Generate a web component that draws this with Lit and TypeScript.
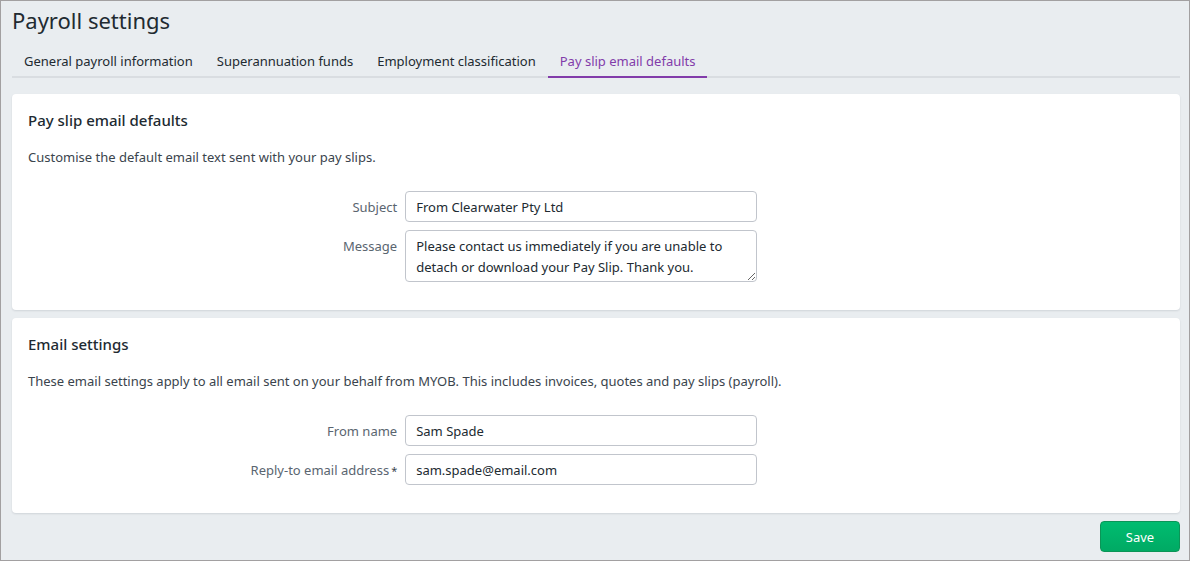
import { LitElement, html, css } from "lit";
import { customElement, state } from "lit/decorators.js";
import { classMap } from "lit/directives/class-map.js";

const TABS = [
  "General payroll information",
  "Superannuation funds",
  "Employment classification",
  "Pay slip email defaults",
];

@customElement("app-root")
export class AppRoot extends LitElement {
  static styles = css`
    :host {
      display: block;
      font-family: "Segoe UI", "Noto Sans", "Open Sans", sans-serif;
      font-size: 13px;
      line-height: 21px;
      color: #212a31;
    }
    *,
    *::before,
    *::after {
      box-sizing: border-box;
    }
    .page {
      min-height: 100vh;
      padding: 0 9px 8px 11px;
      border: 1px solid #a2a0a1;
      background: #e9edf0;
    }
    .title {
      margin: 0;
      padding: 3px 0 5px;
      font-size: 22px;
      line-height: 32px;
      font-weight: 400;
    }
    .tabs {
      display: flex;
      border-bottom: 2px solid #d9dde1;
    }
    .tab {
      margin-bottom: -2px;
      padding: 10px 12px 4px;
      border-bottom: 2px solid transparent;
      color: inherit;
      text-decoration: none;
    }
    .tab.active {
      color: #823caa;
      border-bottom-color: #823caa;
    }
    .cards {
      display: grid;
      gap: 8px;
      margin: 16px 0 8px;
    }
    .card {
      padding: 16px 16px 28px;
      border-radius: 4px;
      background: #fff;
      box-shadow: 0 1px 2px rgba(33, 42, 49, 0.12);
    }
    .heading {
      margin: 0 0 16px;
      font-size: 15px;
      line-height: 21px;
      font-weight: 500;
    }
    .intro {
      margin: 0 0 23px;
      color: #3a444d;
    }
    .fields {
      display: grid;
      grid-template-columns: 32.5% 31%;
      gap: 8px;
    }
    .label {
      padding-top: 6px;
      text-align: right;
      color: #5a6570;
    }
    .required {
      margin-left: 2px;
      font-size: 11px;
      color: #3a444d;
    }
    .control {
      display: block;
      width: 100%;
      min-width: 0;
      margin: 0;
      padding: 4px 10px;
      border: 1px solid #c1c5cc;
      border-radius: 4px;
      background: #fff;
      color: #212a31;
      font: inherit;
    }
    input.control {
      height: 31px;
    }
    textarea.control {
      height: 52px;
      padding-top: 5px;
      padding-bottom: 3px;
      resize: vertical;
      overflow: hidden;
    }
    .actions {
      display: flex;
      justify-content: flex-end;
    }
    .save {
      min-width: 80px;
      padding: 5px 16px 3px;
      border: 1px solid #0b9557;
      border-radius: 4px;
      background: linear-gradient(#00bc70, #00aa64);
      color: #fff;
      font: inherit;
    }
  `;

  @state() private active = 3;

  private select(event: Event, index: number) {
    event.preventDefault();
    this.active = index;
  }

  render() {
    return html`
      <main class="page">
        <h1 class="title">Payroll settings</h1>
        <nav class="tabs">
          ${TABS.map(
            (tab, i) => html`<a
              href="#"
              class=${classMap({ tab: true, active: i === this.active })}
              @click=${(e: Event) => this.select(e, i)}
              >${tab}</a
            >`
          )}
        </nav>
        <div class="cards">
          <section class="card">
            <h2 class="heading">Pay slip email defaults</h2>
            <p class="intro">Customise the default email text sent with your pay slips.</p>
            <div class="fields">
              <label class="label" for="subject">Subject</label>
              <input class="control" id="subject" type="text" .value=${"From Clearwater Pty Ltd"} />
              <label class="label" for="message">Message</label>
              <textarea
                class="control"
                id="message"
                rows="2"
                spellcheck="false"
                .value=${"Please contact us immediately if you are unable to detach or download your Pay Slip. Thank you."}
              ></textarea>
            </div>
          </section>
          <section class="card">
            <h2 class="heading">Email settings</h2>
            <p class="intro">
              These email settings apply to all email sent on your behalf from MYOB. This includes
              invoices, quotes and pay slips (payroll).
            </p>
            <div class="fields">
              <label class="label" for="from">From name</label>
              <input class="control" id="from" type="text" .value=${"Sam Spade"} />
              <label class="label" for="reply"
                >Reply-to email address<span class="required">*</span></label
              >
              <input class="control" id="reply" type="email" required .value=${"sam.spade@email.com"} />
            </div>
          </section>
        </div>
        <div class="actions">
          <button class="save" type="button">Save</button>
        </div>
      </main>
    `;
  }
}
